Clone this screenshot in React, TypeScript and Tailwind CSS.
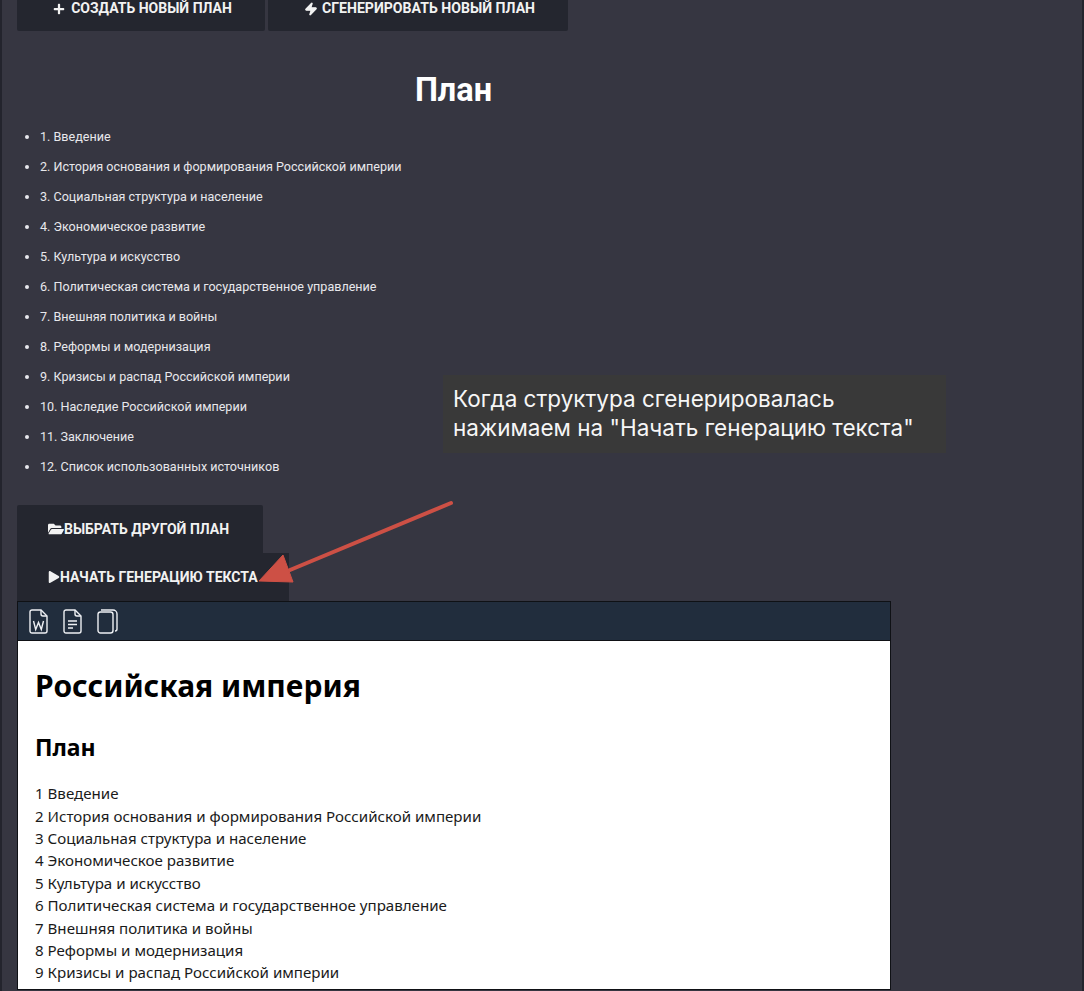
import { FaPlus, FaFolderOpen, FaPlay } from "react-icons/fa";
import { Zap } from "lucide-react";

const planItems = [
  "1. Введение",
  "2. История основания и формирования Российской империи",
  "3. Социальная структура и население",
  "4. Экономическое развитие",
  "5. Культура и искусство",
  "6. Политическая система и государственное управление",
  "7. Внешняя политика и войны",
  "8. Реформы и модернизация",
  "9. Кризисы и распад Российской империи",
  "10. Наследие Российской империи",
  "11. Заключение",
  "12. Список использованных источников",
];

const docItems = [
  "1 Введение",
  "2 История основания и формирования Российской империи",
  "3 Социальная структура и население",
  "4 Экономическое развитие",
  "5 Культура и искусство",
  "6 Политическая система и государственное управление",
  "7 Внешняя политика и войны",
  "8 Реформы и модернизация",
  "9 Кризисы и распад Российской империи",
];

const App = () => {
  return (
    <div className="relative h-[991px] w-[1084px] overflow-hidden border-x-2 border-[#23242d] bg-[#363641] pl-[15px] font-['Roboto',sans-serif] text-white">
      {/* top buttons, cut off by the screenshot */}
      <div className="-mt-[16px] flex gap-[3px]">
        <button className="flex h-[47px] w-[248px] items-center justify-center gap-[6px] rounded-[2px] bg-[#24262f] pt-[2px] pl-[3px] text-[14px] font-bold text-[#f2f2f2]">
          <FaPlus size={12} />
          СОЗДАТЬ НОВЫЙ ПЛАН
        </button>
        <button className="flex h-[47px] w-[300px] items-center justify-center gap-[4px] rounded-[2px] bg-[#24262f] pt-[2px] pl-[3px] text-[14.100px] font-bold text-[#f2f2f2]">
          <Zap size={14} fill="currentColor" />
          СГЕНЕРИРОВАТЬ НОВЫЙ ПЛАН
        </button>
      </div>

      <h2 className="mt-[39px] w-[873px] text-center text-[32.500px] leading-[40px] font-bold">План</h2>

      <ul className="mt-[12px] list-disc pl-[23px] text-[12.570px] leading-[30px] text-[#e8e8ec]">
        {planItems.map((item) => (
          <li key={item}>{item}</li>
        ))}
      </ul>

      <div className="mt-[23px] flex flex-col items-start">
        <button className="flex h-[48px] w-[246px] items-center rounded-t-[2px] bg-[#24262f] pl-[31px] text-[14px] font-bold text-[#f2f2f2]">
          <FaFolderOpen size={16} />
          ВЫБРАТЬ ДРУГОЙ ПЛАН
        </button>
        <button className="flex h-[48px] w-[272px] items-center bg-[#24262f] pl-[31px] text-[14px] font-bold text-[#f2f2f2]">
          <FaPlay size={12} />
          НАЧАТЬ ГЕНЕРАЦИЮ ТЕКСТА
        </button>
      </div>

      {/* document preview */}
      <div className="h-[389px] w-[874px] border border-[#0f1115] bg-white">
        <div className="flex h-[39px] items-center gap-[15px] border-b border-[#0f1115] bg-[#212d3d] pl-[11px]">
          <svg width="19" height="25" viewBox="0 0 19 25" fill="none" stroke="#eef0f3" strokeWidth="1.400">
            <path d="M3 1h9l6 6v15a2 2 0 0 1-2 2H3a2 2 0 0 1-2-2V3a2 2 0 0 1 2-2z" />
            <path d="M12 1v4a2 2 0 0 0 2 2h4" />
            <path d="M4.500 12l2.200 8.500 2.800-7 2.800 7 2.200-8.500" />
          </svg>
          <svg width="19" height="25" viewBox="0 0 19 25" fill="none" stroke="#eef0f3" strokeWidth="1.400">
            <path d="M3 1h9l6 6v15a2 2 0 0 1-2 2H3a2 2 0 0 1-2-2V3a2 2 0 0 1 2-2z" />
            <path d="M12 1v4a2 2 0 0 0 2 2h4" />
            <path d="M5 12h9M5 15.500h9M5 19h5" />
          </svg>
          <svg width="21" height="25" viewBox="0 0 21 25" fill="none" stroke="#eef0f3" strokeWidth="1.400">
            <rect x="1" y="3" width="15" height="21" rx="2.500" />
            <path d="M4 1h12a4 4 0 0 1 4 4v15a2 2 0 0 1-2 2" />
          </svg>
        </div>
        <div className="px-[17px] pt-[26px] font-['Noto_Sans',sans-serif] text-black">
          <h1 className="-mt-px text-[30px] leading-[40px] font-bold">Российская империя</h1>
          <h2 className="mt-[25px] text-[23px] leading-[32px] font-bold">План</h2>
          <div className="mt-[19.200px] text-[15.100px] leading-[22.400px] text-[#1a1a1a]">
            {docItems.map((item) => (
              <div key={item}>{item}</div>
            ))}
          </div>
        </div>
      </div>

      {/* screenshot annotation */}
      <div className="absolute top-[375px] left-[441px] h-[78px] w-[503px] bg-[#393939] pt-[9px] pl-[10px] font-['Inter',sans-serif] text-[22.500px] leading-[29px] text-[#f6f6f6]">
        Когда структура сгенерировалась
        <br />
        нажимаем на "Начать генерацию текста"
      </div>
      <svg className="absolute top-0 left-0" width="1084" height="991" fill="none">
        <path d="M449 503L288 570" stroke="#cd5045" strokeWidth="4" strokeLinecap="round" />
        <path d="M257 581L281 555L291 582Z" fill="#cd5045" stroke="#cd5045" strokeWidth="1" />
      </svg>
    </div>
  );
};

export default App;
